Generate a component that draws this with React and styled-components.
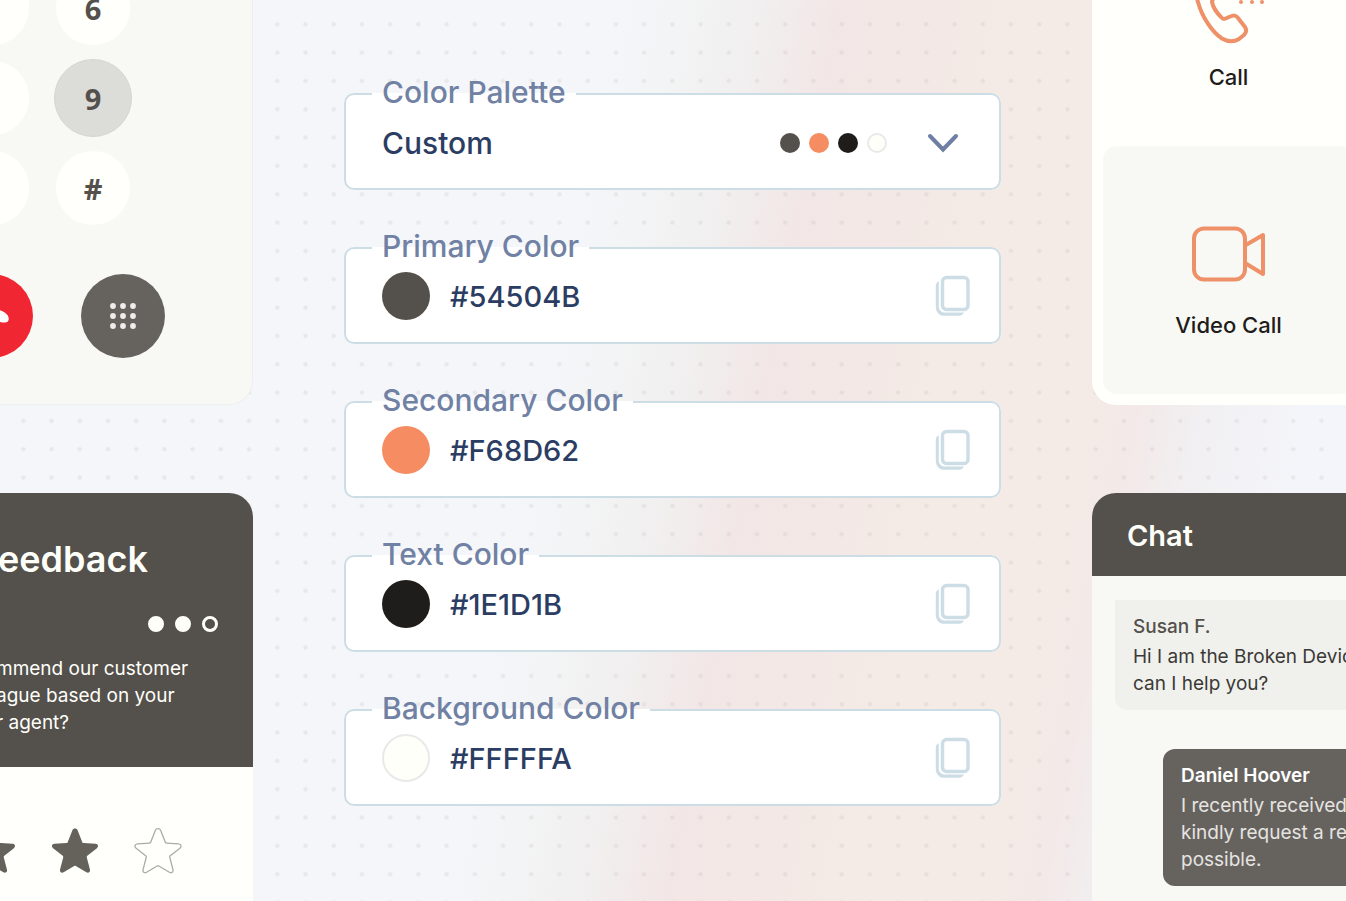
import React, { useState } from "react";
import styled, { createGlobalStyle } from "styled-components";

const colors = [
  { id: "primary", label: "Primary Color", value: "#54504B" },
  { id: "secondary", label: "Secondary Color", value: "#F68D62" },
  { id: "text", label: "Text Color", value: "#1E1D1B" },
  { id: "background", label: "Background Color", value: "#FFFFFA", light: true },
];

const keyRows = [
  ["5", "6"],
  ["8", "9"],
  ["0", "#"],
];

const STAR =
  "M21.3 3.4c1-2.400 4.400-2.400 5.400 0l4.600 11.800c.2.6.7.9 1.300.9l12 .7c2.600.2 3.200 2.900 1.300 4.400l-9.600 7.600c-.5.4-.7 1-.5 1.600l3.200 12.400c.5 2.400-1.700 3.600-3.600 2.400l-10.600-6.200c-.5-.3-1.100-.3-1.600 0l-10.600 6.200c-1.900 1.200-4.100 0-3.600-2.400l3.200-12.400c.2-.6 0-1.200-.5-1.600l-9.600-7.600c-1.900-1.500-1.300-4.200 1.300-4.400l12-.7c.6 0 1.100-.3 1.300-.9z";

const DialKey = ({ digit, pressedKey, onPress }) => (
  <Key
    type="button"
    $pressed={digit === pressedKey}
    onClick={() => onPress(digit)}
  >
    {digit}
  </Key>
);

const StarIcon = ({ filled }) => (
  <svg width="48" height="48" viewBox="0 0 48 48" aria-hidden="true">
    <path
      d={STAR}
      fill={filled ? "#65625c" : "none"}
      stroke={filled ? "none" : "#aaaaa6"}
      strokeWidth="1.300"
    />
  </svg>
);

const CopyIcon = () => (
  <svg width="36" height="42" viewBox="0 0 36 42" fill="none" aria-hidden="true">
    <rect x="7.500" y="2.500" width="25.500" height="32" rx="4" stroke="#cddde6" strokeWidth="3.400" />
    <path
      d="M3.800 6.400C1.800 7 .8 8.500.8 10.500V32c0 5.200 3.400 8.800 8.600 8.800h13.800c2.800 0 4.800-1.200 5.800-3.400H10c-3.800 0-6.200-2.400-6.200-6z"
      fill="#cddde6"
    />
  </svg>
);

const Dialer = () => {
  const [pressedKey, setPressedKey] = useState("9");

  return (
    <DialerCard>
      <Keypad>
        {keyRows.map((row) => (
          <KeyRow key={row[1]}>
            {row.map((digit) => (
              <DialKey
                key={digit}
                digit={digit}
                pressedKey={pressedKey}
                onPress={setPressedKey}
              />
            ))}
          </KeyRow>
        ))}
      </Keypad>
      <CallActions>
        <RoundButton type="button" aria-label="End call" color="#f02733">
          <svg width="38" height="18" viewBox="0 0 62 30" aria-hidden="true">
            <path
              d="M31 3C18 3 7 8 3 14c-3 5-2 12 5 12 4 0 10-1 13-4 2-2 1-5 2-6 4-2 12-2 16 0 1 1 0 4 2 6 3 3 9 4 13 4 7 0 8-7 5-12C55 8 44 3 31 3z"
              fill="#fff"
            />
          </svg>
        </RoundButton>
        <RoundButton type="button" aria-label="Keypad" color="#66635f">
          <svg width="28" height="28" viewBox="0 0 28 28" fill="#f0eeec" aria-hidden="true">
            {[4, 14, 24].map((y) =>
              [4, 14, 24].map((x) => <circle key={`${x}-${y}`} cx={x} cy={y} r="2.900" />)
            )}
          </svg>
        </RoundButton>
      </CallActions>
    </DialerCard>
  );
};

const Feedback = () => (
  <FeedbackCard>
    <FeedbackHeader>
      <FeedbackTitle>eedback</FeedbackTitle>
      <Steps>
        <Step />
        <Step />
        <Step $hollow />
      </Steps>
      <FeedbackText>
        mmend our customer
        <br />
        ague based on your
        <br />r agent?
      </FeedbackText>
    </FeedbackHeader>
    <Stars>
      {[true, true, false].map((filled, idx) => (
        <StarButton key={idx} type="button" aria-label={`Rate ${idx + 3}`}>
          <StarIcon filled={filled} />
        </StarButton>
      ))}
    </Stars>
  </FeedbackCard>
);

const PaletteForm = () => (
  <Form>
    <Field>
      <Legend>Color Palette</Legend>
      <PaletteButton type="button">
        <PaletteName>Custom</PaletteName>
        <Dots>
          {colors.map((color) => (
            <Swatch key={color.id} $size={20} color={color.value} $light={color.light} />
          ))}
        </Dots>
        <svg width="32" height="20" viewBox="0 0 32 20" fill="none" aria-hidden="true">
          <path d="M3 3l13 13.500L29 3" stroke="#6f7ea3" strokeWidth="4" strokeLinecap="round" />
        </svg>
      </PaletteButton>
    </Field>
    {colors.map((color) => (
      <Field key={color.id}>
        <Legend>
          <label htmlFor={color.id}>{color.label}</label>
        </Legend>
        <ColorRow>
          <Swatch $size={48} color={color.value} $light={color.light} />
          <ColorInput id={color.id} type="text" defaultValue={color.value} />
          <CopyButton type="button" aria-label={`Copy ${color.label}`}>
            <CopyIcon />
          </CopyButton>
        </ColorRow>
      </Field>
    ))}
  </Form>
);

const ContactOptions = () => (
  <ContactCard>
    <Option $gap={19}>
      <svg
        width="78"
        height="86"
        viewBox="0 0 78 86"
        fill="none"
        stroke="#ee9068"
        strokeWidth="4"
        strokeLinecap="round"
        strokeLinejoin="round"
        aria-hidden="true"
      >
        <path d="M8 44C5 35 6 25 14 19c4-3 8-2 11 2l6 9c2 4 0 6-3 8-4 2-6 3-6 6 1 5 5 11 9 15 2 3 4 2 8 0 5-2 7-2 9 1l7 9c2 3 1 6-1 8l-5 4c-5 3-11 3-17-.5C22 74 12 59 8 44z" />
        <path d="M51 44v.1M62 44v.1M72 44v.1" />
      </svg>
      <OptionLabel>Call</OptionLabel>
    </Option>
    <Option $gap={27} $shaded>
      <svg
        width="78"
        height="58"
        viewBox="0 0 78 58"
        fill="none"
        stroke="#ee9068"
        strokeWidth="4"
        strokeLinejoin="round"
        aria-hidden="true"
      >
        <rect x="4" y="2.500" width="51" height="51" rx="10" />
        <path d="M55 19.500l18-10.500v39l-18-11" />
      </svg>
      <OptionLabel>Video Call</OptionLabel>
    </Option>
  </ContactCard>
);

const Chat = () => (
  <ChatCard>
    <ChatHeader>Chat</ChatHeader>
    <ChatBody>
      <Message>
        <Sender>Susan F.</Sender>
        Hi I am the Broken Device
        <br />
        can I help you?
      </Message>
      <Message $own>
        <Sender $own>Daniel Hoover</Sender>
        I recently received
        <br />
        kindly request a rep
        <br />
        possible.
      </Message>
    </ChatBody>
  </ChatCard>
);

const App = () => (
  <>
    <GlobalStyle />
    <Page>
      <Backdrop aria-hidden="true">
        <defs>
          <pattern
            id="dots"
            x="263.200"
            y="10.100"
            width="28.220"
            height="28.330"
            patternUnits="userSpaceOnUse"
          >
            <circle cx="14.100" cy="14.100" r="2.200" fill="#b5a7a9" fillOpacity="0.19" />
          </pattern>
        </defs>
        <rect width="100%" height="100%" fill="url(#dots)" />
      </Backdrop>
      <Column>
        <Dialer />
        <Feedback />
      </Column>
      <PaletteForm />
      <Column>
        <ContactOptions />
        <Chat />
      </Column>
    </Page>
  </>
);

const GlobalStyle = createGlobalStyle`
  * {
    box-sizing: border-box;
  }
  body {
    margin: 0;
    font-family: Inter, "Liberation Sans", sans-serif;
    color: #1e1d1b;
  }
  button, input {
    font: inherit;
    color: inherit;
    border: 0;
    padding: 0;
    margin: 0;
    background: none;
  }
  button {
    cursor: pointer;
  }
  svg {
    display: block;
    flex-shrink: 0;
  }
`;

const Page = styled.main`
  position: relative;
  isolation: isolate;
  display: grid;
  grid-template-columns: 253px minmax(0, 1fr) 254px;
  column-gap: 91px;
  height: 100vh;
  overflow: hidden;
  background: linear-gradient(
    101deg,
    #f4f6fa 0%,
    #f4f6fa 40%,
    #f3f4f5 45%,
    #f1efef 50%,
    #f2e7e6 55%,
    #f3e8e5 62%,
    #f4ebe6 69%,
    #f4ebe6 76%,
    #f3e9e8 80%,
    #f1eff1 84%,
    #f4f5fa 91%
  );
`;

const Backdrop = styled.svg`
  position: absolute;
  inset: 0;
  width: 100%;
  height: 100%;
  z-index: -1;
`;

const Column = styled.div`
  display: grid;
  grid-template-rows: 405px minmax(0, 1fr);
  row-gap: 88px;
  min-height: 0;
  min-width: 0;
`;

const DialerCard = styled.section`
  display: flex;
  flex-direction: column;
  justify-content: flex-end;
  align-items: flex-end;
  gap: 47px;
  padding-bottom: 46px;
  overflow: hidden;
  background-color: #f8f9f5;
  border: solid #eeeeee;
  border-width: 0 1px 1px 0;
  border-bottom-right-radius: 24px;
`;

const Keypad = styled.div`
  display: flex;
  flex-direction: column;
  gap: 12px;
  padding-right: 120px;
`;

const KeyRow = styled.div`
  display: flex;
  gap: 23px;
`;

const Key = styled.button`
  width: 78px;
  height: 78px;
  border-radius: 50%;
  border: ${(props) => (props.$pressed ? "1px solid #d5d5d1" : "2px solid #f8f9f5")};
  background-color: ${(props) => (props.$pressed ? "#dcdcd8" : "#fffffc")};
  color: #54504b;
  font-family: "Open Sans", "Noto Sans", sans-serif;
  font-size: 29px;
  font-weight: 700;
`;

const CallActions = styled.div`
  display: flex;
  gap: 48px;
  padding-right: 87px;
`;

const RoundButton = styled.button`
  display: flex;
  justify-content: center;
  align-items: center;
  width: 84px;
  height: 84px;
  border-radius: 50%;
  background-color: ${(props) => props.color};
`;

const FeedbackCard = styled.section`
  overflow: hidden;
  background-color: #fffffc;
  border-top-right-radius: 24px;
`;

const FeedbackHeader = styled.div`
  display: flex;
  flex-direction: column;
  align-items: flex-end;
  padding: 44px 35px 31px 0;
  background-color: #54504b;
  color: #fffffa;
`;

const FeedbackTitle = styled.h2`
  width: 220px;
  margin: 0;
  font-size: 36px;
  line-height: 44px;
  font-weight: 600;
`;

const Steps = styled.div`
  display: flex;
  gap: 11px;
  margin: 35px 0 23px;
`;

const Step = styled.span`
  width: 16px;
  height: 16px;
  border-radius: 50%;
  border: 3px solid #fffffa;
  background-color: ${(props) => (props.$hollow ? "transparent" : "#fffffa")};
`;

const FeedbackText = styled.p`
  width: 222px;
  margin: 0;
  font-size: 19px;
  line-height: 27px;
  white-space: nowrap;
`;

const Stars = styled.div`
  display: flex;
  justify-content: flex-end;
  gap: 35px;
  padding: 60px 71px 0 0;
`;

const StarButton = styled.button`
  display: flex;
`;

const Form = styled.form`
  display: flex;
  flex-direction: column;
  gap: 40px;
  padding-top: 76px;
`;

const Field = styled.fieldset`
  min-width: 0;
  height: 114px;
  margin: 0;
  padding: 0 28px 0 26px;
  border: 2px solid #cddde6;
  border-radius: 10px;
  background-color: #ffffff;
`;

const Legend = styled.legend`
  padding: 0 10px 4px;
  color: #7081a4;
  font-size: 30px;
  line-height: 32px;
  font-weight: 500;
`;

const PaletteButton = styled.button`
  display: flex;
  align-items: center;
  width: 100%;
  height: 62px;
  padding: 0 12px 0 10px;
  color: #2c3d63;
  font-size: 30px;
  font-weight: 500;
`;

const PaletteName = styled.span`
  flex: 1;
  text-align: left;
`;

const Dots = styled.span`
  display: flex;
  gap: 9px;
  margin-right: 40px;
`;

const Swatch = styled.span`
  flex-shrink: 0;
  width: ${(props) => props.$size}px;
  height: ${(props) => props.$size}px;
  border-radius: 50%;
  border: ${(props) => (props.$light ? "2px solid #e9e9e9" : "0")};
  background-color: ${(props) => props.color};
`;

const ColorRow = styled.div`
  display: flex;
  align-items: center;
  height: 60px;
  padding-left: 10px;
`;

const ColorInput = styled.input`
  flex: 1;
  min-width: 0;
  margin-left: 20px;
  color: #2c3d63;
  font-size: 29px;
  font-weight: 500;
`;

const CopyButton = styled.button`
  display: flex;
`;

const ContactCard = styled.section`
  display: flex;
  flex-direction: column;
  justify-content: flex-end;
  gap: 10px;
  padding: 0 0 11px 11px;
  overflow: hidden;
  background-color: #fffffc;
  border-bottom-left-radius: 24px;
`;

const Option = styled.button`
  display: flex;
  flex-direction: column;
  justify-content: center;
  align-items: center;
  gap: ${(props) => props.$gap}px;
  flex-shrink: 0;
  width: 251px;
  height: 248px;
  padding-top: 24px;
  border-radius: 14px;
  background-color: ${(props) => (props.$shaded ? "#f8f9f5" : "transparent")};
`;

const OptionLabel = styled.span`
  font-size: 22px;
  line-height: 28px;
  font-weight: 500;
`;

const ChatCard = styled.section`
  overflow: hidden;
  background-color: #f8f9f5;
  border-top-left-radius: 24px;
`;

const ChatHeader = styled.h2`
  margin: 0;
  padding: 25px 35px 22px;
  background-color: #54504b;
  color: #fffffa;
  font-size: 29px;
  line-height: 36px;
  font-weight: 600;
`;

const ChatBody = styled.div`
  display: flex;
  flex-direction: column;
  gap: 39px;
  padding: 24px 0 0 23px;
`;

const Message = styled.div`
  margin-left: ${(props) => (props.$own ? "48px" : "0")};
  padding: 13px 18px;
  border-radius: ${(props) => (props.$own ? "12px 0 0 12px" : "0 0 0 12px")};
  background-color: ${(props) => (props.$own ? "#66635f" : "#f0f1ed")};
  color: ${(props) => (props.$own ? "#e6e4e1" : "#3b3936")};
  font-size: 19px;
  line-height: 27px;
  white-space: nowrap;
`;

const Sender = styled.strong`
  display: block;
  margin-bottom: 3px;
  color: ${(props) => (props.$own ? "#ffffff" : "#54504b")};
  font-weight: ${(props) => (props.$own ? 600 : 500)};
`;

export default App;
